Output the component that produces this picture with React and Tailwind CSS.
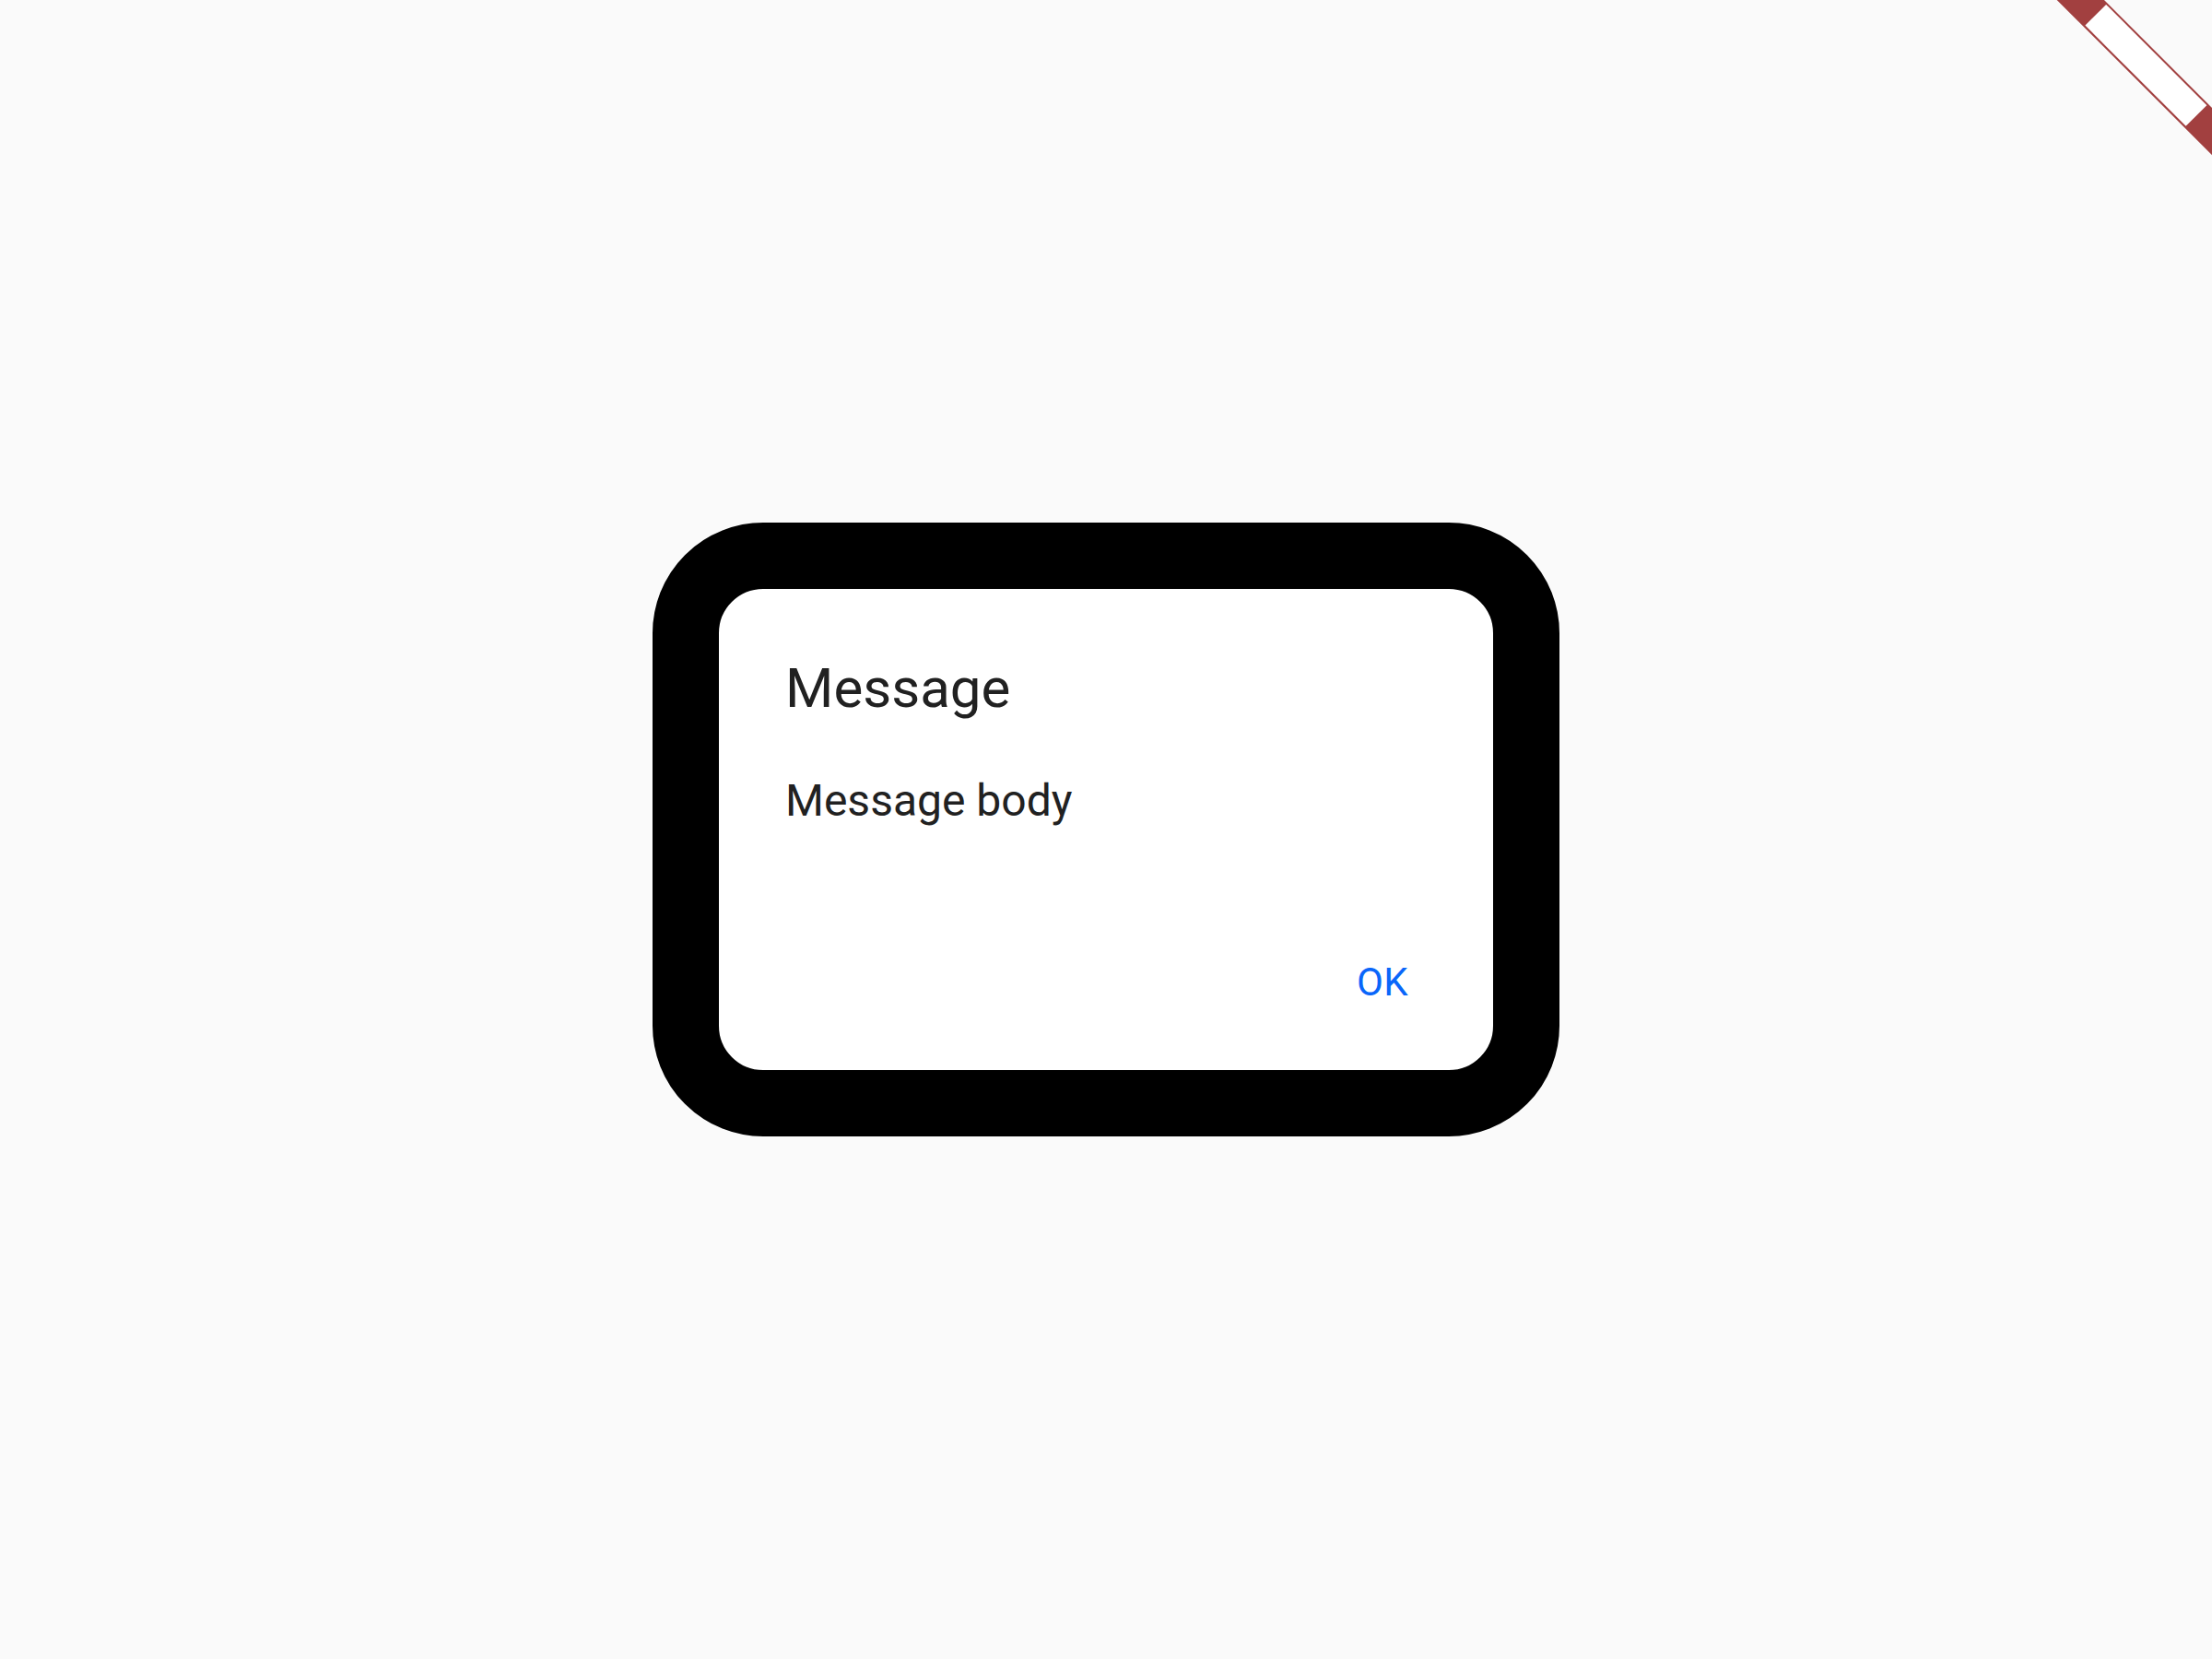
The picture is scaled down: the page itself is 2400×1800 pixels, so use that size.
import React from "react";

function DebugBanner() {
  return (
    <svg
      className="absolute top-0 right-0"
      width="200"
      height="200"
      viewBox="0 0 200 200"
    >
      <polygon points="31.7,0 83,0 283,200 231.7,200" fill="#a24040" />
      <polygon points="62.4,27.6 85.1,4.9 194.35,114.15 171.65,136.85" fill="#ffffff" />
    </svg>
  );
}

export default function App() {
  return (
    <div
      className="relative w-full h-screen overflow-hidden bg-[#fafafa] flex items-center justify-center"
      style={{ fontFamily: "Roboto, 'Noto Sans', sans-serif" }}
    >
      {/* Dialog */}
      <div className="w-[984px] h-[666px] border-[72px] border-black rounded-[120px] bg-white flex flex-col">
        <div className="px-[72px] pt-[73px]">
          <h2 className="text-[60px] leading-[70px] font-normal text-[#212121]">Message</h2>
        </div>
        <div className="px-[72px] pt-[59px] pb-[72px]">
          <p className="text-[48px] leading-[56px] text-[#212121]">Message body</p>
        </div>
        <div className="flex justify-end p-[24px]">
          <button className="w-[192px] h-[144px] flex items-center justify-center text-[42px] leading-[49px] tracking-[0.5px] uppercase font-normal text-[#0a66fa]">
            OK
          </button>
        </div>
      </div>

      <DebugBanner />
    </div>
  );
}
